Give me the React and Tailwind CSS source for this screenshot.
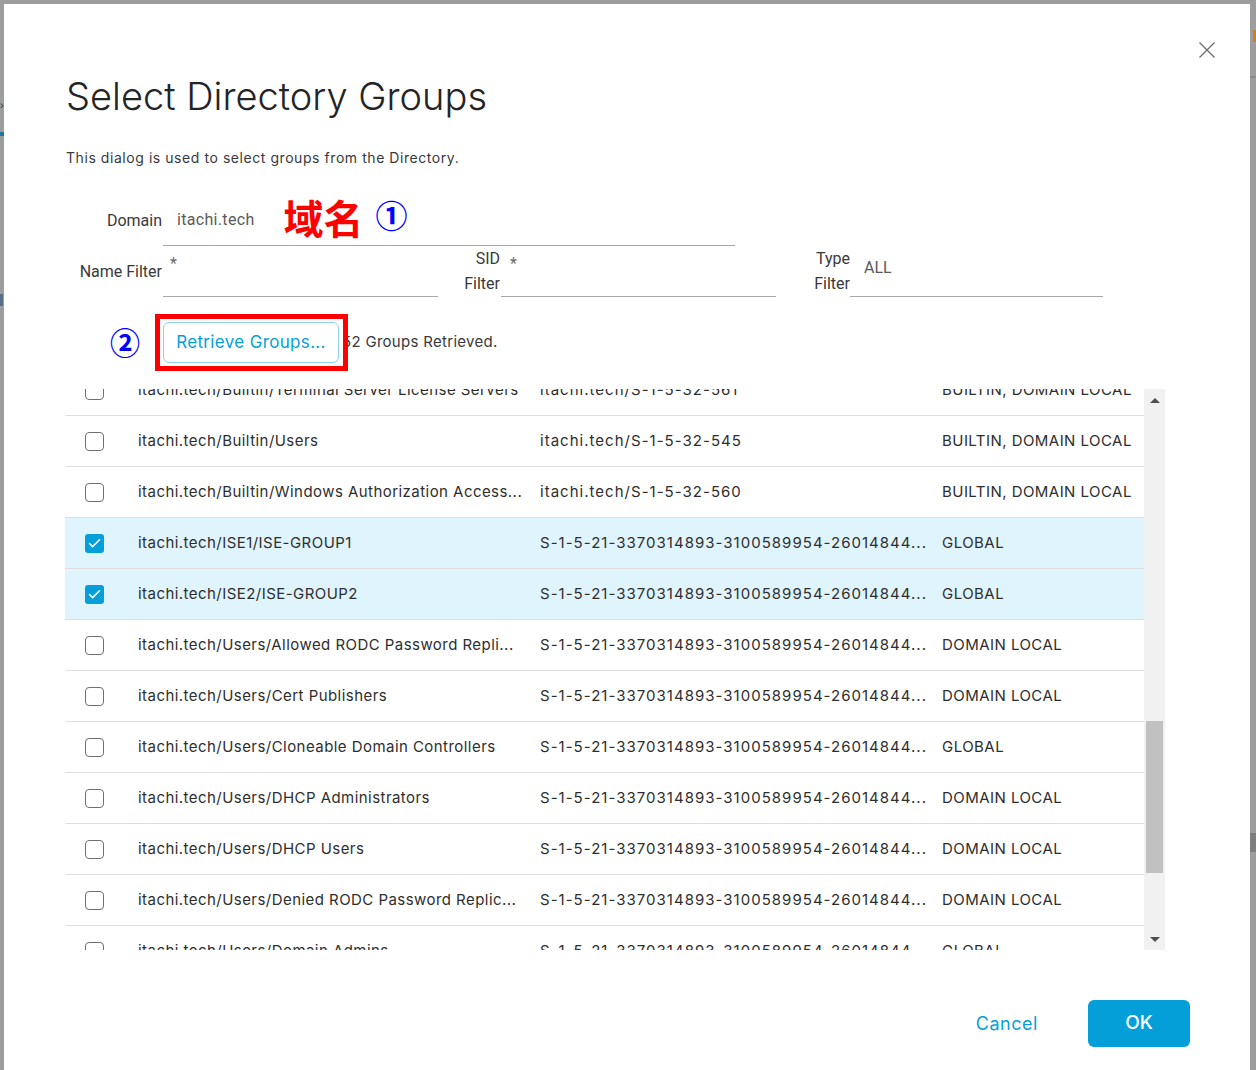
import { Check } from 'lucide-react';

const rows = [
    { name: 'itachi.tech/Builtin/Terminal Server License Servers', sid: 'itachi.tech/S-1-5-32-561', type: 'BUILTIN, DOMAIN LOCAL' },
    { name: 'itachi.tech/Builtin/Users', sid: 'itachi.tech/S-1-5-32-545', type: 'BUILTIN, DOMAIN LOCAL' },
    { name: 'itachi.tech/Builtin/Windows Authorization Access...', sid: 'itachi.tech/S-1-5-32-560', type: 'BUILTIN, DOMAIN LOCAL' },
    { name: 'itachi.tech/ISE1/ISE-GROUP1', sid: 'S-1-5-21-3370314893-3100589954-26014844...', type: 'GLOBAL', checked: true },
    { name: 'itachi.tech/ISE2/ISE-GROUP2', sid: 'S-1-5-21-3370314893-3100589954-26014844...', type: 'GLOBAL', checked: true },
    { name: 'itachi.tech/Users/Allowed RODC Password Repli...', sid: 'S-1-5-21-3370314893-3100589954-26014844...', type: 'DOMAIN LOCAL' },
    { name: 'itachi.tech/Users/Cert Publishers', sid: 'S-1-5-21-3370314893-3100589954-26014844...', type: 'DOMAIN LOCAL' },
    { name: 'itachi.tech/Users/Cloneable Domain Controllers', sid: 'S-1-5-21-3370314893-3100589954-26014844...', type: 'GLOBAL' },
    { name: 'itachi.tech/Users/DHCP Administrators', sid: 'S-1-5-21-3370314893-3100589954-26014844...', type: 'DOMAIN LOCAL' },
    { name: 'itachi.tech/Users/DHCP Users', sid: 'S-1-5-21-3370314893-3100589954-26014844...', type: 'DOMAIN LOCAL' },
    { name: 'itachi.tech/Users/Denied RODC Password Replic...', sid: 'S-1-5-21-3370314893-3100589954-26014844...', type: 'DOMAIN LOCAL' },
    { name: 'itachi.tech/Users/Domain Admins', sid: 'S-1-5-21-3370314893-3100589954-26014844...', type: 'GLOBAL' },
];

function CheckBox({ checked }) {
    if (checked) {
        return (
            <div className="w-[19px] h-[19px] rounded-[3px] bg-[#049fd9] flex items-center justify-center">
                <Check className="w-[15px] h-[15px] text-white" strokeWidth={2.5} />
            </div>
        );
    }
    return <div className="w-[19px] h-[19px] rounded-[4px] border border-[#6f6f6f] bg-white" />;
}

export default function App() {
    return (
        <div className="w-[1256px] h-[1070px] bg-[#9d9d9d] pt-[4px] pl-[4px] pr-[6px] overflow-hidden relative font-['Inter',sans-serif]">
            {/* page peeking out behind the backdrop */}
            <div className="absolute left-0 top-[100px] w-[4px] h-[10px] text-[#333] text-[10px] leading-[10px]">›</div>
            <div className="absolute left-0 top-[132px] w-[4px] h-[4px] bg-[#1b7aa3]" />
            <div className="absolute left-0 top-[294px] w-[3px] h-[12px] bg-[#56708a]" />
            <div className="absolute right-0 top-[30px] w-[3px] h-[12px] bg-[#c8821e]" />
            <div className="absolute right-0 top-[76px] w-[6px] h-[2px] bg-[#8a8a8a]" />
            <div className="absolute right-0 top-[833px] w-[6px] h-[19px] bg-[#7e7e7e]" />

            <div className="bg-white h-full relative pl-[62px] pt-[70px] text-[#39393b]">
                <button className="absolute right-[35px] top-[38px] w-[16px] h-[16px] text-[#6c6c6c]">
                    <svg viewBox="0 0 16 16" className="w-[16px] h-[16px]" fill="none" stroke="currentColor" strokeWidth="1.3">
                        <path d="M0.5 0.5 L15.5 15.5 M15.5 0.5 L0.5 15.5" />
                    </svg>
                </button>

                <h1 className="text-[38px] leading-[44px] font-light text-[#242424]">Select Directory Groups</h1>
                <p className="mt-[30px] text-[14px] leading-[20px] tracking-[0.04em]">
                    This dialog is used to select groups from the Directory.
                </p>

                {/* Domain */}
                <div className="mt-[32px] flex h-[46px] font-['Roboto',sans-serif]">
                    <div className="w-[96px] flex items-center justify-end pb-[5px] text-[16px]">Domain</div>
                    <div className="ml-[1px] w-[572px] border-b border-[#a8a8a8] flex items-center pl-[14px] pb-[12px]">
                        <span className="text-[16px] tracking-[0.02em] text-[#5a5a5a] mt-[6px]">itachi.tech</span>
                        <span className="ml-[29px] text-[40px] leading-[40px] font-bold text-[#ff0000] font-['Noto_Sans_CJK_SC',sans-serif]">域名</span>
                        <span className="ml-[12px] -mt-[6px] text-[32px] leading-[36px] font-bold text-[#0000ff] font-['Noto_Sans_CJK_SC',sans-serif]">①</span>
                    </div>
                </div>

                {/* Filters */}
                <div className="flex h-[51px] font-['Roboto',sans-serif] text-[16px]">
                    <div className="w-[96px] flex items-center justify-end">Name Filter</div>
                    <div className="ml-[1px] w-[275px] border-b border-[#a8a8a8] pl-[7px] pt-[10px] text-[#6a6a6a] leading-[16px]">*</div>
                    <div className="w-[62px] flex flex-col items-end leading-[25px]">
                        <span>SID</span>
                        <span>Filter</span>
                    </div>
                    <div className="ml-[1px] w-[275px] border-b border-[#a8a8a8] pl-[9px] pt-[10px] text-[#6a6a6a] leading-[16px]">*</div>
                    <div className="w-[74px] flex flex-col items-end leading-[25px]">
                        <span>Type</span>
                        <span>Filter</span>
                    </div>
                    <div className="w-[253px] border-b border-[#a8a8a8] pl-[14px] pt-[12px] leading-[20px] text-[#5a5a5a]">ALL</div>
                </div>

                {/* Retrieve */}
                <div className="mt-[17px] h-[57px] flex items-center">
                    <span className="ml-[44px] -mt-[4px] w-[30px] text-[30px] leading-[34px] font-bold text-[#0000ff] font-['Noto_Sans_CJK_SC',sans-serif]">②</span>
                    <div className="ml-[23px] relative">
                        <button className="w-[176px] h-[41px] rounded-[6px] border border-[#8fd0ee] text-[17px] tracking-[0.02em] text-[#049fd9]">
                            Retrieve Groups...
                        </button>
                        <div className="absolute -left-[8px] -top-[8px] -right-[9px] -bottom-[8px] border-[5px] border-[#ff0000]" />
                    </div>
                    <span className="ml-[3px] text-[15px] tracking-[0.02em] text-[#39393b]">52 Groups Retrieved.</span>
                </div>

                {/* Table */}
                <div className="mt-[18px] -ml-[1px] flex h-[561px]">
                    <div className="w-[1079px] overflow-hidden">
                        <div className="-mt-[24px]">
                            {rows.map((r, i) => (
                                <div
                                    key={i}
                                    className={`h-[51px] pt-[1px] border-b border-[#dedede] flex items-center text-[15px] tracking-[0.03em] text-[#2e2e2e] whitespace-nowrap ${r.checked ? 'bg-[#e0f4fd]' : 'bg-white'}`}
                                >
                                    <div className="w-[73px] pl-[20px] shrink-0">
                                        <CheckBox checked={r.checked} />
                                    </div>
                                    <div className="w-[402px] shrink-0 overflow-hidden">{r.name}</div>
                                    <div className="w-[402px] shrink-0 overflow-hidden tracking-[0.068em]">{r.sid}</div>
                                    <div className="flex-1 overflow-hidden">{r.type}</div>
                                </div>
                            ))}
                        </div>
                    </div>
                    <div className="w-[21px] bg-[#f1f1f1] flex flex-col items-center">
                        <div className="h-[22px] flex items-center justify-center">
                            <div className="w-0 h-0 border-l-[5px] border-r-[5px] border-b-[5px] border-l-transparent border-r-transparent border-b-[#505050]" />
                        </div>
                        <div className="mt-[310px] w-[17px] h-[152px] bg-[#c1c1c1]" />
                        <div className="flex-1" />
                        <div className="h-[22px] flex items-center justify-center">
                            <div className="w-0 h-0 border-l-[5px] border-r-[5px] border-t-[5px] border-l-transparent border-r-transparent border-t-[#505050]" />
                        </div>
                    </div>
                </div>

                {/* Footer */}
                <div className="mt-[50px] flex justify-end items-center pr-[60px]">
                    <button className="mr-[50px] text-[18px] text-[#049fd9] tracking-[0.03em]">Cancel</button>
                    <button className="w-[102px] h-[47px] rounded-[6px] bg-[#049fd9] text-white text-[19px] font-medium">OK</button>
                </div>
            </div>
        </div>
    );
}
